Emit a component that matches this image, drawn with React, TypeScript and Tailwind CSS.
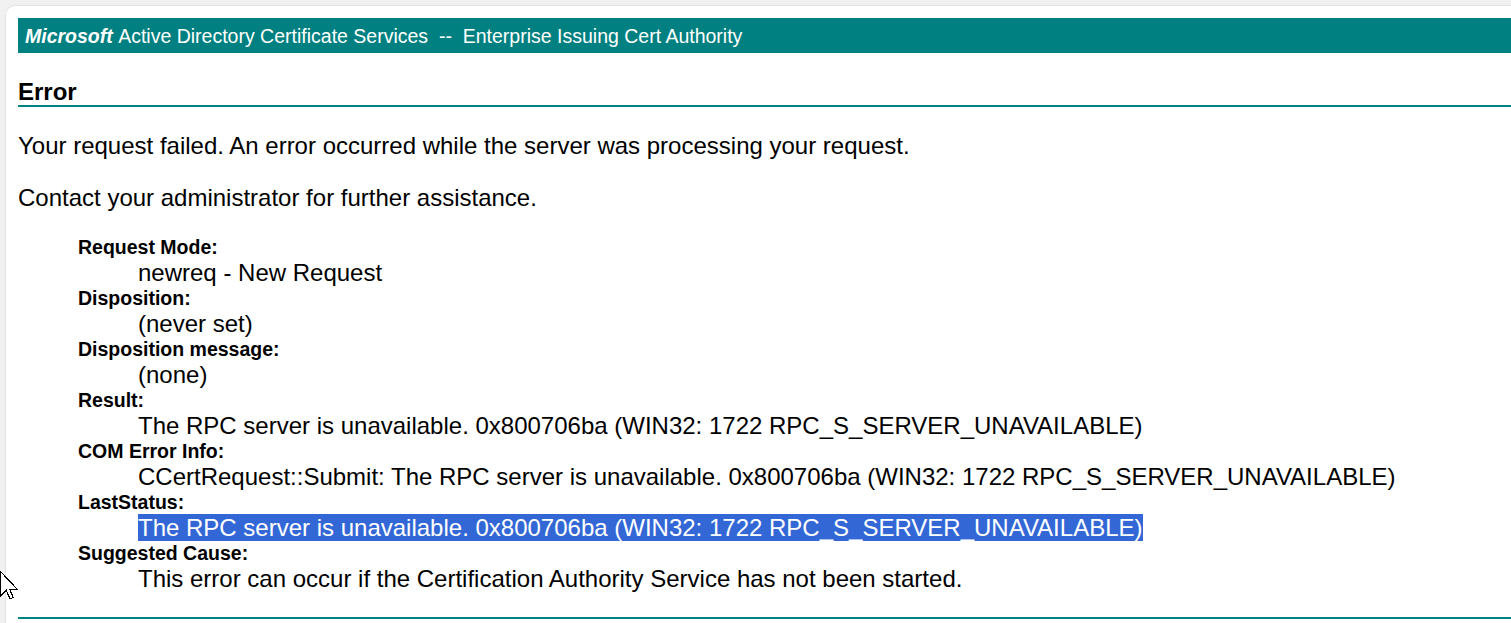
import React from "react";

const items: { label: string; value: string; selected?: boolean }[] = [
  { label: "Request Mode:", value: "newreq - New Request" },
  { label: "Disposition:", value: "(never set)" },
  { label: "Disposition message:", value: "(none)" },
  {
    label: "Result:",
    value: "The RPC server is unavailable. 0x800706ba (WIN32: 1722 RPC_S_SERVER_UNAVAILABLE)",
  },
  {
    label: "COM Error Info:",
    value:
      "CCertRequest::Submit: The RPC server is unavailable. 0x800706ba (WIN32: 1722 RPC_S_SERVER_UNAVAILABLE)",
  },
  {
    label: "LastStatus:",
    value: "The RPC server is unavailable. 0x800706ba (WIN32: 1722 RPC_S_SERVER_UNAVAILABLE)",
    selected: true,
  },
  {
    label: "Suggested Cause:",
    value: "This error can occur if the Certification Authority Service has not been started.",
  },
];

function Cursor() {
  return (
    <svg
      className="absolute left-0 top-[571px]"
      width="19"
      height="29"
      viewBox="0 0 13 20"
      shapeRendering="crispEdges"
    >
      <path
        d="M0.5 0.5 L0.5 17 L4.3 13.4 L6.9 19.2 L9.1 18.3 L6.6 12.6 L11.8 12.6 Z"
        fill="#fff"
        stroke="#000"
        strokeWidth="0.8"
        strokeLinejoin="miter"
      />
    </svg>
  );
}

export default function App() {
  return (
    <div className="relative h-[623px] w-full overflow-hidden bg-[#f1f1f1] pl-[5px] pt-[5px] font-['Liberation_Sans',Arial,sans-serif] text-black">
      <div className="h-full overflow-hidden rounded-tl-[10px] border-l border-t border-[#e3e3e3] bg-white pl-[12px] pt-[12px]">
        <div className="flex h-[35px] items-center whitespace-nowrap bg-[#008080] pl-[7px] text-[19.5px] leading-[22px] text-white">
          <span className="font-bold italic">Microsoft</span>
          <span>&nbsp;Active Directory Certificate Services &nbsp;-- &nbsp;Enterprise Issuing Cert Authority</span>
        </div>

        <div className="mt-[27px] h-[27px] border-b-2 border-[#008080] text-[24px] font-bold leading-[24px]">
          Error
        </div>

        <p className="mt-[25px] whitespace-nowrap text-[24px] leading-[28px]">
          Your request failed. An error occurred while the server was processing your request.
        </p>
        <p className="mt-[24px] whitespace-nowrap text-[24px] leading-[28px]">
          Contact your administrator for further assistance.
        </p>

        <dl className="mt-[24px] pl-[60px]">
          {items.map((it) => (
            <div key={it.label}>
              <dt className="text-[19.5px] font-bold leading-[23px]">{it.label}</dt>
              <dd className="whitespace-nowrap pl-[60px] text-[24px] leading-[28px]">
                {it.selected ? (
                  <span className="bg-[#3367d6] text-white">{it.value}</span>
                ) : (
                  it.value
                )}
              </dd>
            </div>
          ))}
        </dl>

        <div className="mt-[24px] h-[2px] bg-[#008080]" />
      </div>
      <Cursor />
    </div>
  );
}
